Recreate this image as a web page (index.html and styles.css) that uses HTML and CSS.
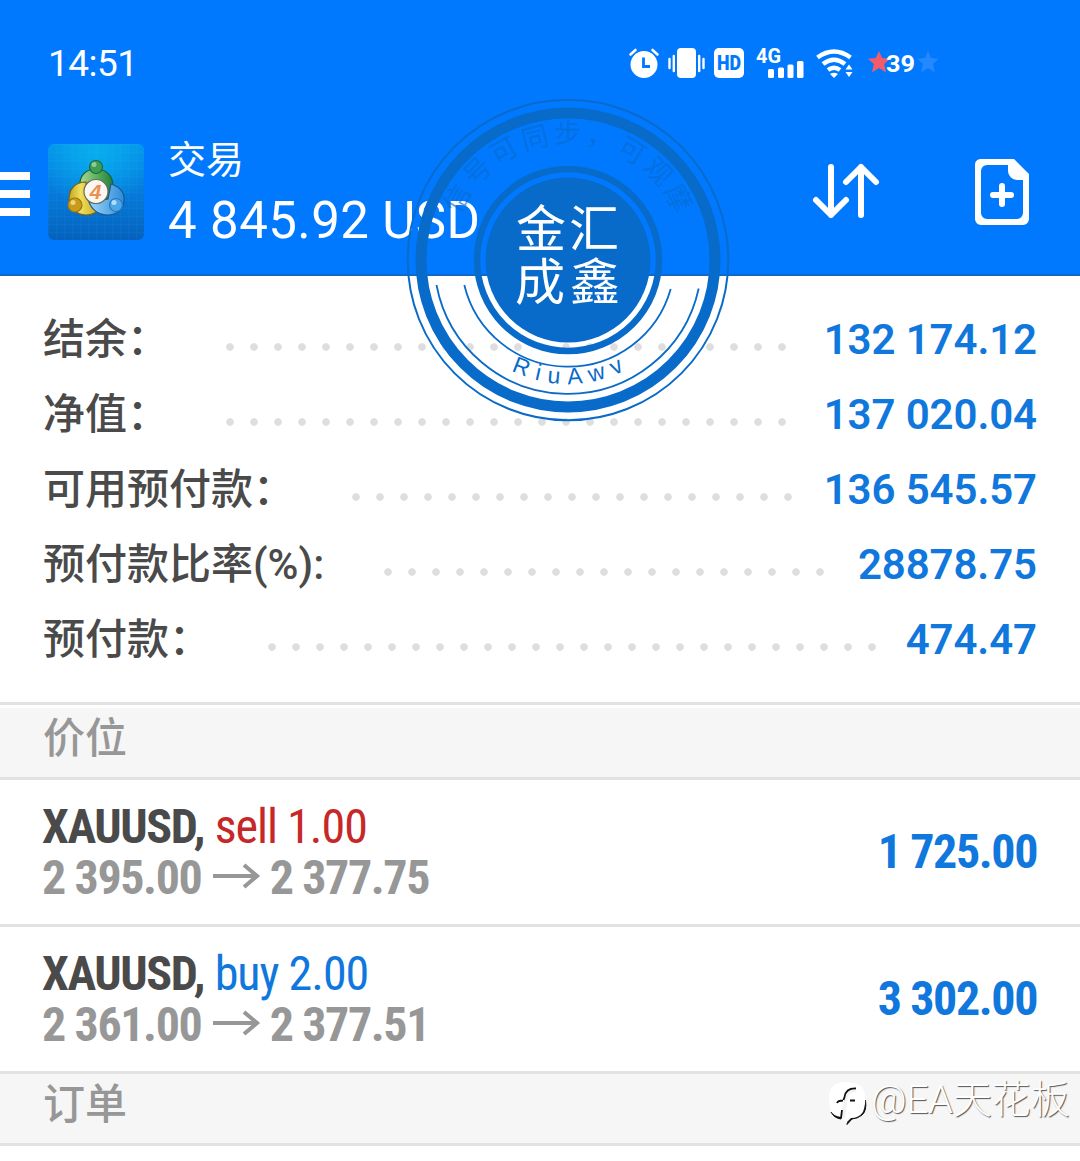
FILE: index.html
```html
<!DOCTYPE html>
<html lang="zh-CN">
<head>
    <meta charset="UTF-8">
    <meta name="viewport" content="width=device-width, initial-scale=1.0">
    <title>交易</title>
    <link rel="stylesheet" href="styles.css">
</head>
<body>
    <header>
        <div class="status">
            <span class="clock">14:51</span>
            <div class="status-icons">
                <!-- alarm -->
                <svg width="30" height="30" viewBox="0 0 30 30">
                    <circle cx="15" cy="16.5" r="13.5" fill="#fff"/>
                    <path d="M1.500 6.500L6.500 2M28.500 6.500L23.500 2" stroke="#fff" stroke-width="2.600" stroke-linecap="round"/>
                    <path d="M14.500 9.500v9h6.500" fill="none" stroke="#0079ff" stroke-width="2.800"/>
                </svg>
                <!-- vibrate -->
                <svg width="37" height="30" viewBox="0 0 37 30">
                    <rect x="9" y="0" width="19" height="30" rx="4" fill="#fff"/>
                    <path d="M1.500 11v9M5.800 8v15M31.200 8v15M35.500 11v9" stroke="#fff" stroke-width="2.400" stroke-linecap="round"/>
                </svg>
                <svg width="30" height="30" viewBox="0 0 30 30">
                    <rect width="30" height="30" rx="5" fill="#fff"/>
                    <text x="15" y="22" class="hd" textLength="24" lengthAdjust="spacingAndGlyphs">HD</text>
                </svg>
                <!-- signal -->
                <svg width="48" height="30" viewBox="0 0 48 30">
                    <text x="0" y="14.500" class="net" textLength="25" lengthAdjust="spacingAndGlyphs">4G</text>
                    <g fill="#fff">
                        <rect x="12" y="21" width="6" height="9" rx="1.500"/>
                        <rect x="22" y="19.500" width="6" height="10.500" rx="1.500"/>
                        <rect x="31.500" y="16.500" width="6" height="13.500" rx="1.500"/>
                        <rect x="41" y="13" width="6.500" height="17" rx="1.500"/>
                    </g>
                </svg>
                <!-- wifi -->
                <svg width="37" height="30" viewBox="0 0 37 30">
                    <g fill="none" stroke="#fff" stroke-width="4.500">
                        <path d="M1.500 9.500Q18 -2.500 34.500 9.500"/>
                        <path d="M7 16Q18 7.500 29 16"/>
                        <path d="M12 22Q18 17.500 24 22"/>
                    </g>
                    <path d="M14 26q4-2.500 8 0l-4 4z" fill="#fff"/>
                    <path d="M29.500 21.500l3.500-5 3.500 5zM29.500 24l3.500 5 3.500-5z" fill="#fff"/>
                </svg>
                <!-- battery -->
                <svg width="72" height="30" viewBox="0 0 72 30">
                    <path d="M11 3l3.200 7 7.800.8-5.800 5.200 1.800 8.500-7-4.500-7 4.500 1.800-8.500L0 10.800l7.800-.8z" fill="#f25c6a"/>
                    <path d="M60 3l3 7 7.500.8-5.500 5.200 1.800 8.500-6.800-4.500-6.800 4.500 1.800-8.500-5.500-5.200 7.500-.8z" fill="#2488ff"/>
                    <text x="18" y="23.500" class="bat" textLength="29" lengthAdjust="spacingAndGlyphs">39</text>
                </svg>
            </div>
        </div>

        <div class="bar">
            <div class="menu"><i></i><i></i><i></i></div>
            <svg class="logo" width="96" height="96" viewBox="0 0 96 96">
                <defs>
                    <linearGradient id="sky" x1="0" y1="0" x2="0" y2="1">
                        <stop offset="0" stop-color="#0394ea"/>
                        <stop offset=".5" stop-color="#067bda"/>
                        <stop offset="1" stop-color="#0562bd"/>
                    </linearGradient>
                    <radialGradient id="glow" cx=".5" cy=".08" r=".6">
                        <stop offset="0" stop-color="#08aeee"/>
                        <stop offset="1" stop-color="#08aeee" stop-opacity="0"/>
                    </radialGradient>
                    <pattern id="mesh" width="8" height="8" patternUnits="userSpaceOnUse">
                        <path d="M0 0H8M0 0V8" stroke="#39b5ff" stroke-width="1" opacity=".14"/>
                    </pattern>
                    <linearGradient id="green"><stop offset="0" stop-color="#a9dc93"/><stop offset=".6" stop-color="#4fa756"/><stop offset="1" stop-color="#23803a"/></linearGradient>
                    <linearGradient id="gold"><stop offset="0" stop-color="#c6a61d"/><stop offset=".4" stop-color="#efdf5c"/><stop offset="1" stop-color="#c9a820"/></linearGradient>
                    <linearGradient id="blue"><stop offset="0" stop-color="#9ad6f8"/><stop offset="1" stop-color="#2f8bd6"/></linearGradient>
                </defs>
                <rect width="96" height="96" rx="6" fill="url(#sky)"/>
                <rect width="96" height="96" rx="6" fill="url(#glow)"/>
                <rect width="96" height="96" rx="6" fill="url(#mesh)"/>
                <g stroke-width="1.200">
                    <path d="M32 42C31 31 39 25 48 25s17 6 17 17c0 6-2 11-5 14L48 42 38 48z" fill="url(#green)" stroke="#1c5c38"/>
                    <path d="M38 38c-11 0-17 7-17 17 0 10 8 16 17 16 5 0 9-2 12-4L39 55z" fill="url(#gold)" stroke="#6f6220"/>
                    <path d="M63 40c9 3 14 9 13 17-1 9-8 14-16 14-9 0-16-5-19-13l19-3z" fill="url(#blue)" stroke="#1b5796"/>
                    <circle cx="48" cy="23" r="6.500" fill="#3f9d58" stroke="#1e6a38"/>
                    <circle cx="46" cy="20.500" r="2.500" fill="#8fcb93"/>
                    <circle cx="27" cy="61" r="7" fill="#c99b1c" stroke="#9a7714"/>
                    <circle cx="25" cy="58.500" r="2.500" fill="#edd578"/>
                    <circle cx="68" cy="61" r="6.500" fill="#4ba7e8" stroke="#2b78bd"/>
                    <circle cx="66" cy="58.500" r="2.500" fill="#b0def8"/>
                    <circle cx="48" cy="47.500" r="12" fill="#fbf8f3" stroke="#6d6b55"/>
                </g>
                <text x="47.500" y="55" class="four">4</text>
            </svg>
            <div class="account">
                <div class="title">交易</div>
                <div class="total">4 845.92 USD</div>
            </div>
            <svg class="sort" width="68" height="58" viewBox="0 0 68 58">
                <path d="M19 4v48M4 37l15 15 15-15M49 52V4M34 19L49 4l15 15" fill="none" stroke="#fff" stroke-width="6" stroke-linecap="round" stroke-linejoin="round"/>
            </svg>
            <svg class="new-order" width="54" height="66" viewBox="0 0 54 66">
                <path d="M5 0H39L54 15V60a6 6 0 0 1-6 6H6a6 6 0 0 1-6-6V6a6 6 0 0 1 5-6zM12 6a6 6 0 0 0-6 6v42a6 6 0 0 0 6 6h30a6 6 0 0 0 6-6V21h-6a9 9 0 0 1-9-9V6z" fill="#fff" fill-rule="evenodd"/>
                <path d="M27 27v18M18 36h18" stroke="#fff" stroke-width="6" stroke-linecap="round"/>
            </svg>
        </div>
    </header>

    <section class="summary">
        <div class="line"><span class="label">结余：</span><span class="dots"></span><span class="value">132 174.12</span></div>
        <div class="line"><span class="label">净值：</span><span class="dots"></span><span class="value">137 020.04</span></div>
        <div class="line"><span class="label">可用预付款：</span><span class="dots"></span><span class="value">136 545.57</span></div>
        <div class="line ratio"><span class="label">预付款比率(%):</span><span class="dots"></span><span class="value">28878.75</span></div>
        <div class="line"><span class="label">预付款：</span><span class="dots"></span><span class="value">474.47</span></div>
    </section>

    <h3 class="first">价位</h3>

    <div class="position">
        <div class="deal">
            <div><b>XAUUSD,</b> <span class="sell">sell 1.00</span></div>
            <div class="prices">2 395.00 <svg width="46" height="26" viewBox="0 0 46 26"><path d="M0 13H44M31 2L44 13 31 24" fill="none" stroke="#979797" stroke-width="4"/></svg> 2 377.75</div>
        </div>
        <div class="profit">1 725.00</div>
    </div>
    <div class="position">
        <div class="deal">
            <div><b>XAUUSD,</b> <span class="buy">buy 2.00</span></div>
            <div class="prices">2 361.00 <svg width="46" height="26" viewBox="0 0 46 26"><path d="M0 13H44M31 2L44 13 31 24" fill="none" stroke="#979797" stroke-width="4"/></svg> 2 377.51</div>
        </div>
        <div class="profit">3 302.00</div>
    </div>

    <h3>订单</h3>

    <!-- round stamp over the header -->
    <svg class="stamp" width="324" height="324" viewBox="-162 -162 324 324">
        <defs>
            <path id="arcTop" d="M-117 0A117 117 0 0 1 117 0"/>
            <path id="arcBottom" d="M-124 0A124 124 0 0 0 124 0"/>
        </defs>
        <g fill="none" stroke="#086bca">
            <circle r="160.300" stroke-width="2"/>
            <circle r="147" stroke-width="11"/>
            <circle r="91" stroke-width="6.500"/>
            <path d="M-131.500 25A133.800 133.800 0 0 0 130.700 28.500" stroke-width="1.800"/>
            <path d="M-103.700 25A106.700 106.700 0 0 0 102.700 29" stroke-width="1.800"/>
        </g>
        <circle r="82.500" fill="#086bca"/>
        <text class="stamp-top"><textPath href="#arcTop" startOffset="50.500%">信号可同步，可观摩</textPath></text>
        <text class="stamp-bottom"><textPath href="#arcBottom" startOffset="51%">RiuAwv</textPath></text>
        <text class="stamp-name" x="-52 1" y="-13">金汇</text>
        <text class="stamp-name" x="-53 2" y="40">成鑫</text>
    </svg>

    <div class="watermark">
        <svg width="42" height="46" viewBox="0 0 42 46">
            <path d="M2 32Q5 38 12 39L13 34M36.500 20Q38 31 33 35 29 38.500 23 39L18 44.500 19 40" fill="#111" stroke="#111"/>
            <path d="M2 31Q0 24 0 16 1 2 17 2 34 2 36 14 37 24 34 32 30 38 22 38L17 43 12 37Q4 36 2 31z" fill="#fff"/>
            <path d="M14 38L17 17Q19 10 27 10" fill="none" stroke="#f3f3f3" stroke-width="4"/>
            <path d="M27 8.500Q17 8 15.500 17L14.500 20M8 23Q9 20.500 14 20.500M21 20.500H26M12 38L13 30" fill="none" stroke="#111" stroke-width="1.800"/>
        </svg>
        <span>@EA天花板</span>
    </div>
</body>
</html>
```
FILE: styles.css
```css
body {
    margin: 0;
    position: relative;
    height: 1161px;
    overflow: hidden;
    background: #fff;
    font-family: Roboto, "Noto Sans CJK SC", sans-serif;
    color: #4a4a4a;
}

svg {
    display: block;
    flex: none;
    overflow: visible;
}

header {
    height: 274px;
    background: #0079ff;
    border-bottom: 2px solid #1268c8;
    color: #fff;
}

.status {
    display: flex;
    justify-content: space-between;
    height: 80px;
    padding: 24px 140px 0 48px;
    box-sizing: border-box;
}

.clock {
    font-size: 37px;
    line-height: 80px;
    letter-spacing: -0.5px;
}

.status-icons {
    display: flex;
    padding-top: 24px;
}

.status-icons svg {
    margin-right: 9px;
}

.status-icons svg:nth-child(4) {
    margin: 0 12px 0 3px;
}

.status-icons svg:nth-child(5) {
    margin-right: 15px;
}

.status-icons svg:last-child {
    margin-right: 0;
}

.hd {
    font: 900 20px Roboto, sans-serif;
    fill: #0079ff;
    text-anchor: middle;
}

.net {
    font: bold 20px Roboto, sans-serif;
    fill: #fff;
}

.bat {
    font: bold 24px Roboto, sans-serif;
    fill: #fff;
}

.bar {
    display: flex;
    align-items: flex-start;
    padding-top: 54px;
}

.menu {
    width: 30px;
    margin: 38px 18px 0 0;
}

.menu i {
    display: block;
    height: 8px;
    margin-bottom: 10px;
    background: #fff;
}

.logo {
    margin-top: 10px;
}

.four {
    font: bold italic 21px "Liberation Sans", sans-serif;
    fill: #ee8f50;
    text-anchor: middle;
}

.account {
    width: 668px;
    padding-left: 24px;
    box-sizing: border-box;
}

.title {
    font-size: 38px;
    line-height: 52px;
}

.total {
    font-size: 51px;
    line-height: 70px;
    letter-spacing: 0.4px;
}

.sort {
    margin-top: 29px;
}

.new-order {
    margin: 25px 0 0 95px;
}

.summary {
    height: 400px;
    padding: 26px 43px 0;
    border-bottom: 3px solid #e2e2e2;
}

.line {
    display: flex;
    height: 75px;
    line-height: 75px;
    font-size: 42px;
}

.label {
    font-weight: 500;
}

.dots {
    flex: 1;
    height: 8px;
    margin: 41px 26px 0 49px;
    background: radial-gradient(circle, #dedede 3.4px, transparent 4.2px) 0 0 / 24px 8px repeat-x;
}

.ratio .dots {
    margin-left: 52px;
}

.value {
    color: #1077dd;
    font-weight: 600;
    letter-spacing: -0.1px;
}

h3 {
    height: 69px;
    margin: 0;
    padding-left: 43px;
    border-bottom: 3px solid #e2e2e2;
    background: #f6f6f6;
    color: #979797;
    font-size: 42px;
    font-weight: 500;
    line-height: 61px;
}

h3.first {
    border-top: 3px solid #fff;
}

.position {
    display: flex;
    justify-content: space-between;
    height: 144px;
    padding: 0 43px 0 42px;
    border-bottom: 3px solid #e2e2e2;
    font-family: "Roboto Condensed", Roboto, sans-serif;
    font-stretch: 75%;
    font-size: 48px;
    line-height: 51px;
    letter-spacing: -1.4px;
}

.deal {
    padding-top: 21px;
}

.sell,
.buy {
    margin-left: 1px;
    letter-spacing: -1px;
}

.sell {
    color: #c62828;
}

.buy {
    color: #1077dd;
}

.prices {
    color: #979797;
    font-weight: bold;
}

.prices svg {
    display: inline-block;
    margin: 0 1px 0 2px;
    vertical-align: 5px;
}

.profit {
    color: #1077dd;
    font-weight: bold;
    line-height: 144px;
}

.stamp {
    position: absolute;
    left: 406px;
    top: 98px;
}

.stamp text {
    font-family: "Noto Sans CJK SC", sans-serif;
    fill: #086bca;
}

.stamp .stamp-top {
    font-size: 27px;
    letter-spacing: 4px;
    text-anchor: middle;
    opacity: .6;
}

.stamp .stamp-bottom {
    font-family: "Liberation Sans", sans-serif;
    font-size: 23px;
    letter-spacing: 8px;
    text-anchor: middle;
}

.stamp .stamp-name {
    font-size: 50px;
    fill: #fff;
}

.watermark {
    position: absolute;
    left: 829px;
    top: 1080px;
    display: flex;
    color: #fff;
    font-size: 39px;
    font-weight: 300;
    line-height: 41px;
    letter-spacing: -0.1px;
    white-space: nowrap;
    text-shadow: 1px 1px 1px #555;
}
```
